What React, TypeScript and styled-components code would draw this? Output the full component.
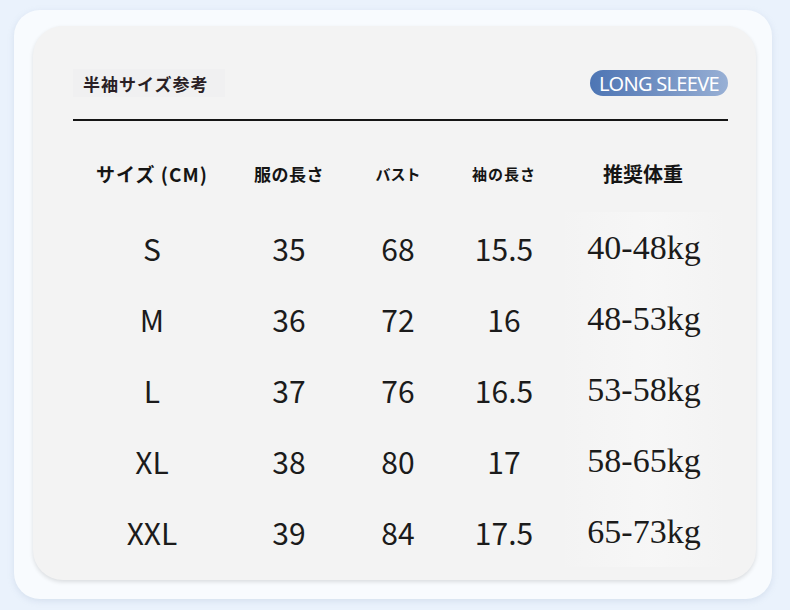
import React from 'react';
import styled, { createGlobalStyle } from 'styled-components';

const GlobalStyle = createGlobalStyle`
  html, body {
    margin: 0;
    padding: 0;
    background-color: #eaf2fc;
  }
  body {
    font-family: "Noto Sans CJK JP", "Noto Sans", sans-serif;
  }
`;

const Page = styled.div`
  width: 790px;
  height: 610px;
  box-sizing: border-box;
  padding: 10px 18px 11px 14px;
  background-color: #eaf2fc;
`;

const OuterCard = styled.div`
  height: 100%;
  box-sizing: border-box;
  padding: 16px 16px 19px 19px;
  border-radius: 26px;
  background-color: #f8fbfe;
  box-shadow: 0 2px 6px rgba(150, 170, 200, 0.25);
`;

const InnerCard = styled.div`
  height: 100%;
  box-sizing: border-box;
  padding: 43px 28px 12px 40px;
  border-radius: 30px;
  background-color: #f3f3f3;
  box-shadow: 0 2px 4px rgba(0, 0, 0, 0.12);
  display: flex;
  flex-direction: column;
`;

const TitleRow = styled.div`
  display: flex;
  justify-content: space-between;
  align-items: center;
  height: 28px;
`;

const Title = styled.div`
  height: 28px;
  width: 152px;
  box-sizing: border-box;
  padding-left: 10px;
  display: flex;
  align-items: center;
  background-color: #f0f0f1;
  color: #2a1f25;
  font-family: "Noto Sans CJK JP", sans-serif;
  font-weight: 700;
  font-size: 17px;
  letter-spacing: 1px;
`;

const Pill = styled.div`
  height: 26px;
  width: 138px;
  border-radius: 13px;
  background: linear-gradient(90deg, #4d75b4 0%, #7593c4 55%, #98b0d5 100%);
  color: #ffffff;
  font-family: "Noto Sans", sans-serif;
  font-size: 20px;
  letter-spacing: -0.7px;
  display: flex;
  align-items: center;
  justify-content: center;
`;

const Rule = styled.div`
  height: 2px;
  margin-top: 22px;
  background-color: #151515;
`;

const Table = styled.div`
  display: grid;
  grid-template-columns: 158px 116px 102px 110px 168px;
  grid-template-rows: 57px repeat(5, 71px);
  margin-top: 34px;
`;

const HeadCell = styled.div<{ $size: number; $spacing: number }>`
  display: flex;
  align-items: center;
  justify-content: center;
  padding-bottom: 21px;
  color: #151515;
  font-family: "Noto Sans CJK JP", sans-serif;
  font-size: ${(p) => p.$size}px;
  font-weight: 700;
  letter-spacing: ${(p) => p.$spacing}px;
  white-space: nowrap;
`;

const Cell = styled.div<{ $serif?: boolean }>`
  display: flex;
  align-items: center;
  justify-content: center;
  color: #1b1b1b;
  white-space: nowrap;
  font-family: ${(p) =>
    p.$serif ? '"Liberation Serif", serif' : '"Noto Sans CJK JP", sans-serif'};
  font-size: ${(p) => (p.$serif ? 34 : 30)}px;
  padding-left: ${(p) => (p.$serif ? 2 : 0)}px;
  background: ${(p) =>
    p.$serif
      ? 'linear-gradient(90deg, rgba(243,243,243,0), rgba(249,249,249,0.6) 55%, rgba(243,243,243,0))'
      : 'transparent'};
`;

const headers: { label: string; size: number; spacing: number }[] = [
  { label: 'サイズ (CM)', size: 19, spacing: 1 },
  { label: '服の長さ', size: 17, spacing: 0.5 },
  { label: 'バスト', size: 15, spacing: 0 },
  { label: '袖の長さ', size: 15, spacing: 1 },
  { label: '推奨体重', size: 20, spacing: 0 },
];

const rows: string[][] = [
  ['S', '35', '68', '15.5', '40-48kg'],
  ['M', '36', '72', '16', '48-53kg'],
  ['L', '37', '76', '16.5', '53-58kg'],
  ['XL', '38', '80', '17', '58-65kg'],
  ['XXL', '39', '84', '17.5', '65-73kg'],
];

export default function App() {
  return (
    <>
      <GlobalStyle />
      <Page>
        <OuterCard>
          <InnerCard>
            <TitleRow>
              <Title>半袖サイズ参考</Title>
              <Pill>LONG SLEEVE</Pill>
            </TitleRow>
            <Rule />
            <Table>
              {headers.map((h) => (
                <HeadCell key={h.label} $size={h.size} $spacing={h.spacing}>
                  {h.label}
                </HeadCell>
              ))}
              {rows.map((r) =>
                r.map((v, i) => (
                  <Cell key={r[0] + i} $serif={i === 4}>
                    {v}
                  </Cell>
                ))
              )}
            </Table>
          </InnerCard>
        </OuterCard>
      </Page>
    </>
  );
}
